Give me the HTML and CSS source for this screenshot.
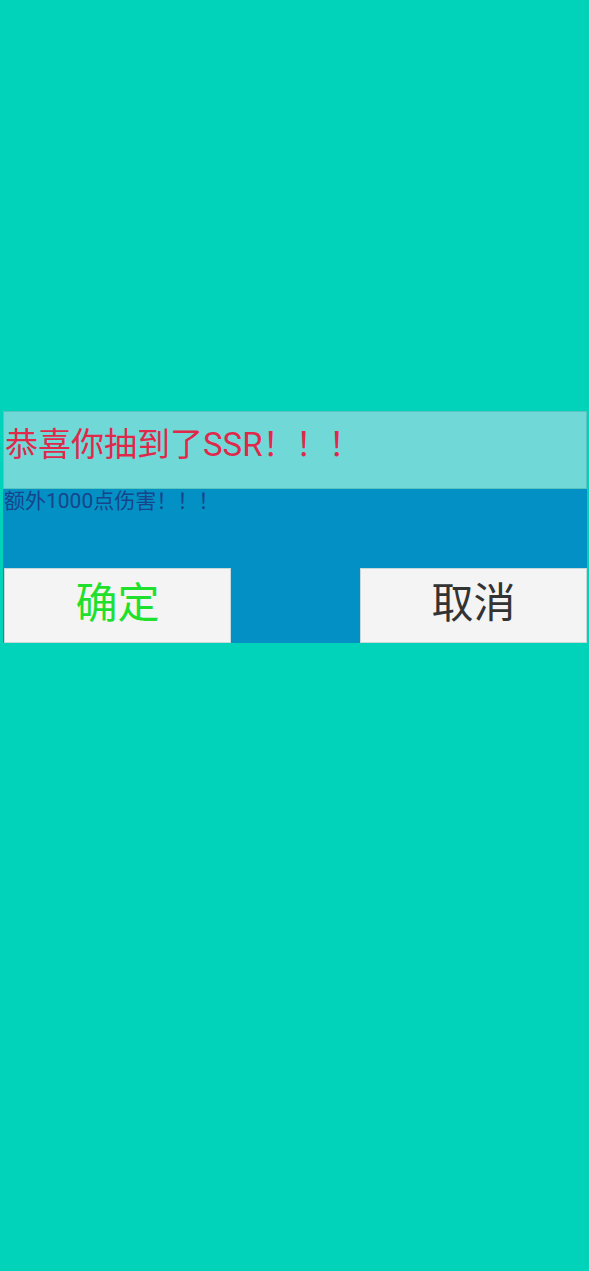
FILE: index.html
```html
<!DOCTYPE html>
<html lang="zh-CN">
<head>
<meta charset="utf-8">
<title>SSR</title>
<link rel="stylesheet" href="styles.css">
</head>
<body>
<div class="screen">
  <div class="dialog">
    <div class="title">恭喜你抽到了SSR！！！</div>
    <div class="body">
      <div class="message">额外1000点伤害！！！</div>
      <div class="actions">
        <button class="btn btn-ok">确定</button>
        <button class="btn btn-cancel">取消</button>
      </div>
    </div>
  </div>
</div>
</body>
</html>
```

FILE: styles.css
```css
html, body {
  margin: 0;
  padding: 0;
  background: #00d3b9;
}
body {
  font-family: Roboto, "Noto Sans CJK SC", sans-serif;
}
.screen {
  width: 589px;
  height: 1271px;
  padding-top: 411px;
  box-sizing: border-box;
}
.dialog {
  margin: 0 2px 0 3px;
  display: flex;
  flex-direction: column;
}
.title {
  height: 78px;
  box-sizing: border-box;
  background: #70d8d6;
  border: 1px solid #58c4c0;
  color: #e0284a;
  font-size: 33px;
  line-height: 40px;
  padding: 13px 0 0 1px;
  white-space: nowrap;
}
.body {
  background: #0290c5;
  height: 154px;
  display: flex;
  flex-direction: column;
}
.message {
  color: #17448a;
  font-size: 21px;
  line-height: 24px;
  height: 79px;
  padding-left: 1px;
  white-space: nowrap;
}
.actions {
  display: flex;
  justify-content: space-between;
  padding-left: 1px;
}
.btn {
  width: 227px;
  height: 75px;
  margin: 0;
  background: #f4f4f4;
  border: 1px solid #c8d8d8;
  border-radius: 0;
  font-family: Roboto, "Noto Sans CJK SC", sans-serif;
  font-size: 42px;
  padding: 0 0 4px;
  line-height: 1;
}
.btn-ok {
  color: #1fe02c;
}
.btn-cancel {
  color: #333333;
}
```
